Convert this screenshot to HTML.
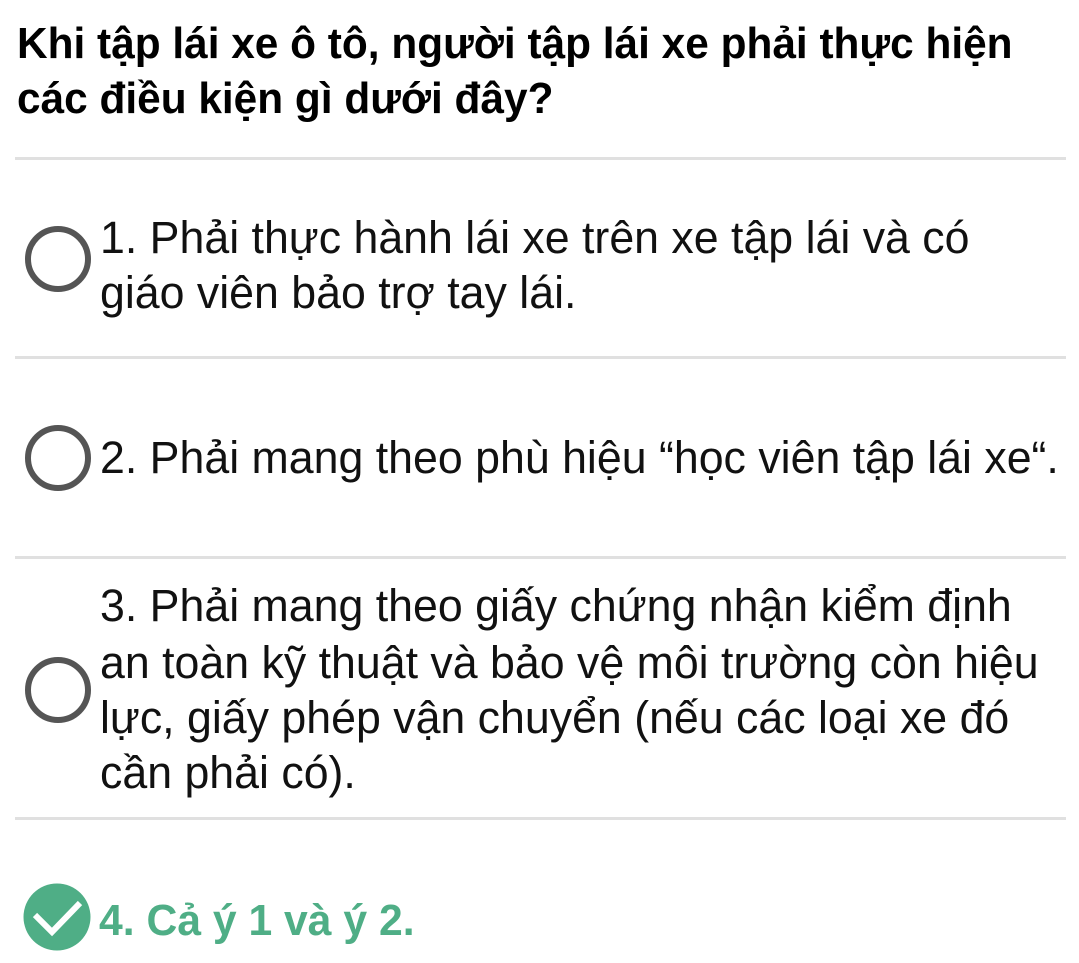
<!DOCTYPE html>
<html><head><meta charset="utf-8"><style>
html,body{margin:0;padding:0;background:#fff;width:1079px;height:963px;overflow:hidden;position:relative;font-family:"Liberation Sans",sans-serif;}
.t{position:absolute;white-space:nowrap;line-height:1;}
.title{font-weight:bold;font-size:44px;color:#000;transform:scaleX(0.963);transform-origin:left top;left:17px;}
.opt{font-size:45px;color:#111;left:100px;transform:scaleX(0.993);transform-origin:left top;}
.hr{position:absolute;left:15px;width:1051px;height:3px;background:#e0e0e0;}
.rad{position:absolute;left:25px;width:54px;height:54px;border:6px solid #555;border-radius:50%;}
</style></head><body>
<div class="t title" style="top:22px">Khi tập lái xe ô tô, người tập lái xe phải thực hiện</div>
<div class="t title" style="top:77px">các điều kiện gì dưới đây?</div>
<div class="hr" style="top:157px"></div>

<div class="rad" style="top:226px"></div>
<div class="t opt" style="top:215px">1. Phải thực hành lái xe trên xe tập lái và có</div>
<div class="t opt" style="top:270px">giáo viên bảo trợ tay lái.</div>
<div class="hr" style="top:356px"></div>

<div class="rad" style="top:425px"></div>
<div class="t opt" style="top:435px">2. Phải mang theo phù hiệu “học viên tập lái xe“.</div>
<div class="hr" style="top:556px"></div>

<div class="rad" style="top:657px"></div>
<div class="t opt" style="top:583px">3. Phải mang theo giấy chứng nhận kiểm định</div>
<div class="t opt" style="top:640px">an toàn kỹ thuật và bảo vệ môi trường còn hiệu</div>
<div class="t opt" style="top:695px">lực, giấy phép vận chuyển (nếu các loại xe đó</div>
<div class="t opt" style="top:750px">cần phải có).</div>
<div class="hr" style="top:817px"></div>

<svg style="position:absolute;left:23px;top:883px" width="68" height="68" viewBox="0 0 68 68">
<circle cx="34" cy="34" r="33.5" fill="#4fae86"/>
<path d="M12 32 L29 49 L57 20" fill="none" stroke="#fff" stroke-width="6"/>
</svg>
<div class="t" style="left:99px;top:899px;font-size:44px;font-weight:bold;color:#4fae86;transform:scaleX(0.97);transform-origin:left top">4. Cả ý 1 và ý 2.</div>
</body></html>
